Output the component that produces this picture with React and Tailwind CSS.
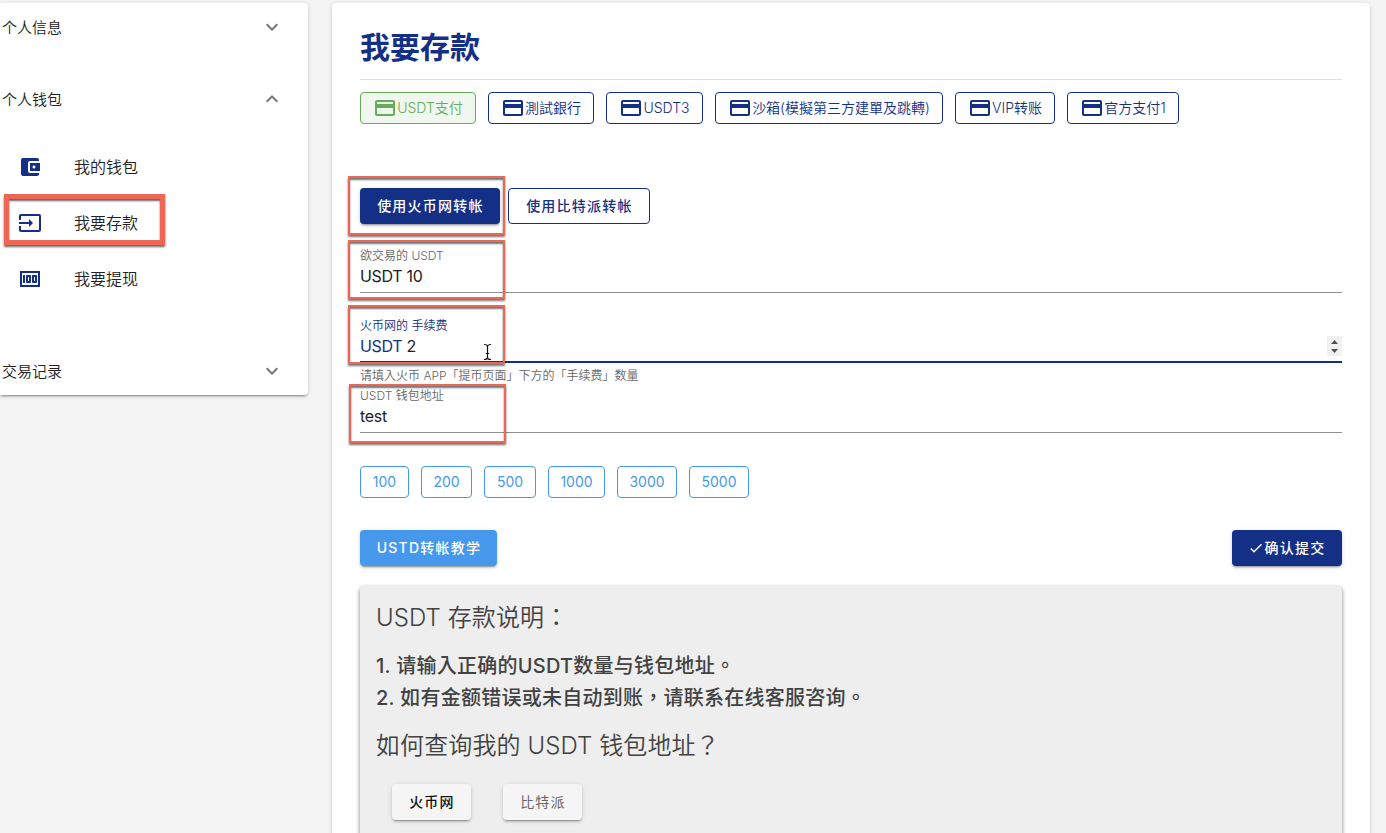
import React from "react";
import {
  MdAccountBalanceWallet,
  MdInput,
  MdMoney,
  MdPayment,
  MdExpandMore,
  MdExpandLess,
  MdCheck,
} from "react-icons/md";

const raised =
  "shadow-[0_3px_1px_-2px_rgba(0,0,0,0.2),0_2px_2px_0_rgba(0,0,0,0.14),0_1px_5px_0_rgba(0,0,0,0.12)]";

function Group({ title, open, className }) {
  const Icon = open ? MdExpandLess : MdExpandMore;
  return (
    <div className={`flex h-12 items-center justify-between pr-6 pl-0.5 ${className}`}>
      <span className="text-[15px] leading-none">{title}</span>
      <Icon className="size-6 text-[#757575]" />
    </div>
  );
}

function Item({ icon: Icon, label }) {
  return (
    <div className="flex h-14 items-center pl-[18px]">
      <Icon className="size-6 text-[#132f86]" />
      <span className="ml-8 text-[16px] leading-none">{label}</span>
    </div>
  );
}

function Sidebar() {
  return (
    <aside
      className={`mt-[3px] h-[392px] w-[308px] shrink-0 rounded-r bg-white font-[350] ${raised}`}
    >
      <Group title="个人信息" className="" />
      <Group title="个人钱包" open className="mt-6" />
      <div className="mt-4 flex flex-col">
        <Item icon={MdAccountBalanceWallet} label="我的钱包" />
        <Item icon={MdInput} label="我要存款" />
        <Item icon={MdMoney} label="我要提现" />
      </div>
      <Group title="交易记录" className="mt-10" />
    </aside>
  );
}

const methods = [
  { label: "USDT支付", width: "w-[116px]", active: true },
  { label: "測試銀行", width: "w-[106px]" },
  { label: "USDT3", width: "w-[97px]" },
  { label: "沙箱(模擬第三方建單及跳轉)", width: "w-[228px]" },
  { label: "VIP转账", width: "w-[100px]" },
  { label: "官方支付1", width: "w-[112px]" },
];

const amounts = [
  { value: 100, width: "w-[49px]" },
  { value: 200, width: "w-[51px]" },
  { value: 500, width: "w-[52px]" },
  { value: 1000, width: "w-[57px]" },
  { value: 3000, width: "w-[60px]" },
  { value: 5000, width: "w-[60px]" },
];

function Field({ label, prefix, value, focused, stepper }) {
  return (
    <div
      className={`flex h-12 flex-col ${
        focused ? "border-b-2 border-[#132f86]" : "border-b border-[#8f8f8f]"
      }`}
    >
      <div
        className={`h-5 pt-px text-[12px] leading-[20px] font-[350] whitespace-pre ${
          focused ? "text-[#132f86]" : "text-[#666]"
        }`}
      >
        {label}
      </div>
      <div className="flex h-[22px] items-center justify-between text-[16px] leading-[22px] tracking-[-0.3px]">
        <div className="whitespace-pre">
          {prefix && <span className={focused ? "text-[#132f86]" : ""}>{prefix} </span>}
          {value}
        </div>
        {stepper && (
          <div className="flex h-5 w-[15px] flex-col items-center justify-center gap-[5px] bg-[#f0f0f0]">
            <svg width="7" height="4" viewBox="0 0 7 4" fill="#505050">
              <path d="M3.5 0L7 4H0z" />
            </svg>
            <svg width="7" height="4" viewBox="0 0 7 4" fill="#505050">
              <path d="M3.5 4L0 0h7z" />
            </svg>
          </div>
        )}
      </div>
    </div>
  );
}

const thinMark =
  "absolute w-[157px] border-2 border-[#ee6656] shadow-[0_2px_2px_rgba(0,0,0,0.55),inset_0_2px_2px_rgba(0,0,0,0.55)]";

function Marks() {
  return (
    <>
      <div className="absolute top-[194px] left-1 h-[51px] w-[161px] border-[5px] border-[#ee6656] shadow-[0_2px_2px_rgba(0,0,0,0.6),inset_0_2px_2px_rgba(0,0,0,0.6)]" />
      <div className={`${thinMark} top-[175.5px] left-[347.5px] h-[59px]`} />
      <div className={`${thinMark} top-[239.5px] left-[347.5px] h-[59px]`} />
      <div className={`${thinMark} top-[304.5px] left-[347.5px] h-[59px]`} />
      <div className={`${thinMark} top-[383.5px] left-[348.5px] h-[59px]`} />
      <svg
        className="absolute top-[343px] left-[483px]"
        width="9"
        height="18"
        viewBox="0 0 9 18"
        fill="none"
        stroke="#111"
        strokeWidth="1.2"
      >
        <path d="M1 1.5c2 0 3.5.6 3.5 2v11c0 1.400-1.500 2-3.500 2M8 1.500c-2 0-3.500.6-3.500 2M8 16.500c-2 0-3.500-.6-3.500-2M2.800 10.500h3.400" />
      </svg>
    </>
  );
}

export default function App() {
  return (
    <div className="relative flex h-[833px] w-[1386px] gap-6 overflow-hidden bg-[#f4f4f4] font-['Inter','Noto_Sans_CJK_TC',sans-serif] text-[#212121]">
      <Sidebar />
      <main
        className={`mt-[3px] h-[900px] w-[1038px] shrink-0 rounded-t bg-white px-7 ${raised}`}
      >
        <h1 className="flex h-[77px] items-center border-b border-[#dedede] pt-[13px] text-[30px] leading-none font-bold text-[#132f86]">
          <span className="pb-0.5">我要存款</span>
        </h1>

        <div className="mt-3 flex gap-3">
          {methods.map((m) => (
            <div
              key={m.label}
              className={`flex h-8 items-center justify-center rounded border text-[14px] leading-none font-[350] whitespace-nowrap ${m.width} ${
                m.active
                  ? "border-[#67ac5b] bg-[#f0f7ef] text-[#67ac5b]"
                  : "border-[#132f86] bg-white text-[#132f86]"
              }`}
            >
              <MdPayment className="size-6 shrink-0" />
              <span>{m.label}</span>
            </div>
          ))}
        </div>

        <div className="mt-16 flex gap-2 text-[14px] leading-none font-medium tracking-[1.25px]">
          <button
            className={`h-9 w-[140px] rounded bg-[#132f86] pl-px text-white ${raised}`}
          >
            使用火币网转帐
          </button>
          <button className="h-9 w-[142px] rounded border border-[#132f86] pl-px text-[#132f86]">
            使用比特派转帐
          </button>
        </div>

        <div className="mt-[21px] flex flex-col">
          <Field label="欲交易的 USDT" prefix="USDT" value="10" />
          <div className="h-[22px]" />
          <Field label="火币网的 手续费" prefix="USDT" value="2" focused stepper />
          <div className="h-[22px] pt-1 text-[12px] leading-[18px] font-[350] text-[#666]">
            请填入火币 APP「提币页面」下方的「手续费」数量
          </div>
          <Field label="USDT 钱包地址" value="test" />
        </div>

        <div className="mt-[33px] flex gap-3 text-[14px] leading-none text-[#4698ec]">
          {amounts.map((a) => (
            <div
              key={a.value}
              className={`flex h-8 items-center justify-center rounded border border-[#4698ec] ${a.width}`}
            >
              {a.value}
            </div>
          ))}
        </div>

        <div className="mt-8 flex justify-between text-[14px] leading-none font-medium tracking-[1.25px] text-white">
          <button className={`h-9 w-[137px] rounded bg-[#4698ec] pl-px ${raised}`}>
            USTD转帐教学
          </button>
          <button
            className={`flex h-9 w-[110px] items-center justify-center rounded bg-[#132f86] ${raised}`}
          >
            <MdCheck className="mr-px -ml-px size-4" />
            确认提交
          </button>
        </div>

        <section className="mt-5 h-[300px] rounded bg-[#eee] px-4 pt-4 text-[#424242] shadow-[0_2px_4px_rgba(0,0,0,0.5)]">
          <h2 className="h-8 text-[24px] leading-[32px] font-[350] tracking-[0.1px]">
            USDT 存款说明：
          </h2>
          <div className="mt-4 text-[20px] leading-[32px] font-medium tracking-[0.25px]">
            <p>1. 请输入正确的USDT数量与钱包地址。</p>
            <p>2. 如有金额错误或未自动到账，请联系在线客服咨询。</p>
          </div>
          <h2 className="mt-4 h-8 text-[24px] leading-[32px] font-[350] tracking-[0.1px]">
            如何查询我的 USDT 钱包地址？
          </h2>
          <div className="mt-[22px] ml-4 flex gap-8 text-[14px] leading-none font-medium tracking-[1.25px]">
            <button className={`h-9 w-[79px] rounded bg-[#f5f5f5] pl-px text-[#111] ${raised}`}>
              火币网
            </button>
            <button className={`h-9 w-[79px] rounded bg-[#f5f5f5] pl-px font-normal text-[#666] ${raised}`}>
              比特派
            </button>
          </div>
        </section>
      </main>
      <Marks />
    </div>
  );
}
